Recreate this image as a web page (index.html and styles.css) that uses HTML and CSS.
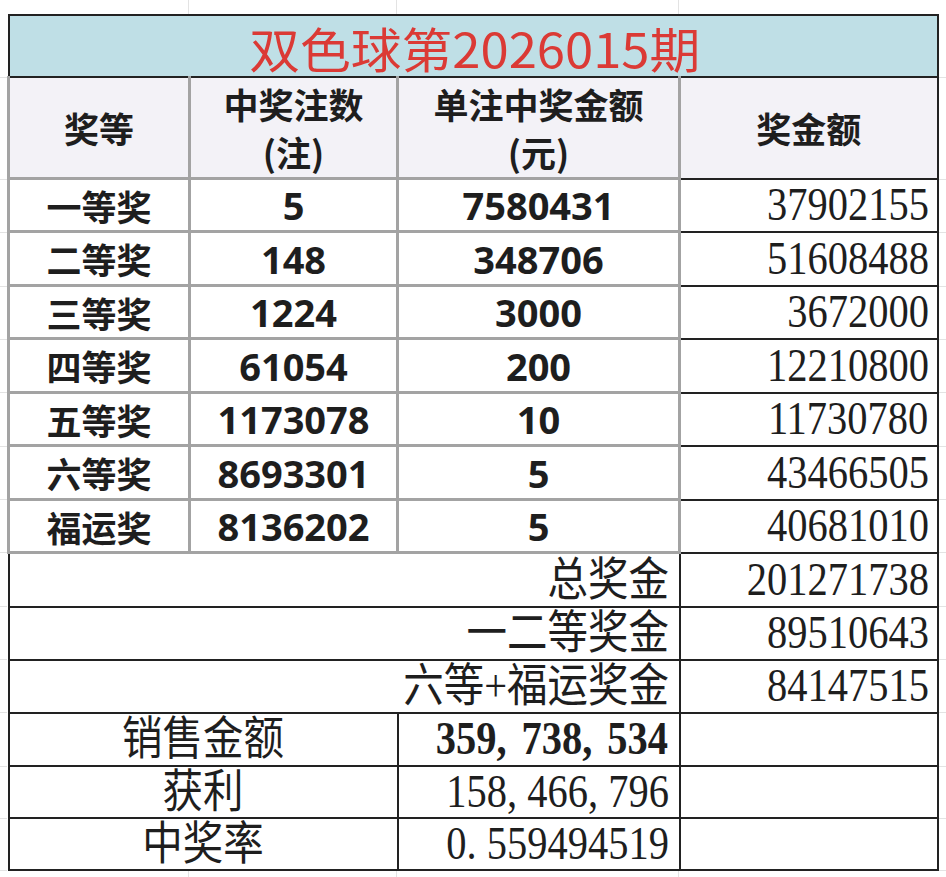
FILE: index.html
```html
<!DOCTYPE html>
<html lang="zh-CN">
<head>
<meta charset="utf-8">
<title>双色球第2026015期</title>
<link rel="stylesheet" href="styles.css">
</head>
<body>
<div class="sheet">
<table class="prize">
  <colgroup>
    <col class="c1"><col class="c2"><col class="c3"><col class="c4">
  </colgroup>
  <tr class="title"><td colspan="4"><span class="title-text">双色球第2026015期</span></td></tr>
  <tr class="head">
    <th>奖等</th>
    <th>中奖注数<br>(注)</th>
    <th>单注中奖金额<br>(元)</th>
    <th class="k">奖金额</th>
  </tr>
  <tr class="d ha"><td class="lbl">一等奖</td><td class="num">5</td><td class="num">7580431</td><td class="amt"><span>37902155</span></td></tr>
  <tr class="d hb"><td class="lbl">二等奖</td><td class="num">148</td><td class="num">348706</td><td class="amt"><span>51608488</span></td></tr>
  <tr class="d ha"><td class="lbl">三等奖</td><td class="num">1224</td><td class="num">3000</td><td class="amt"><span>3672000</span></td></tr>
  <tr class="d hb"><td class="lbl">四等奖</td><td class="num">61054</td><td class="num">200</td><td class="amt"><span>12210800</span></td></tr>
  <tr class="d ha"><td class="lbl">五等奖</td><td class="num">1173078</td><td class="num">10</td><td class="amt"><span>11730780</span></td></tr>
  <tr class="d hb"><td class="lbl">六等奖</td><td class="num">8693301</td><td class="num">5</td><td class="amt"><span>43466505</span></td></tr>
  <tr class="d ha"><td class="lbl">福运奖</td><td class="num">8136202</td><td class="num">5</td><td class="amt"><span>40681010</span></td></tr>
  <tr class="s hs1"><td colspan="3" class="slbl"><span>总奖金</span></td><td class="amt"><span>201271738</span></td></tr>
  <tr class="s hs"><td colspan="3" class="slbl"><span>一二等奖金</span></td><td class="amt"><span>89510643</span></td></tr>
  <tr class="s hs"><td colspan="3" class="slbl"><span>六等+福运奖金</span></td><td class="amt"><span>84147515</span></td></tr>
  <tr class="f hf1"><td colspan="2" class="flbl"><span>销售金额</span></td><td class="fval strong"><span>359<i class="cm">,</i>738<i class="cm">,</i>534</span></td><td></td></tr>
  <tr class="f hf"><td colspan="2" class="flbl"><span>获利</span></td><td class="fval"><span>158<i class="cm">,</i>466<i class="cm">,</i>796</span></td><td></td></tr>
  <tr class="f hf"><td colspan="2" class="flbl"><span>中奖率</span></td><td class="fval"><span>0<i class="cm">.</i>559494519</span></td><td></td></tr>
</table>
</div>
</body>
</html>
```
FILE: styles.css
```css
html, body {
  margin: 0;
  padding: 0;
  background: #ffffff;
}

/* spreadsheet canvas with faint grid lines around the table */
.sheet {
  --g: linear-gradient(#e3e3e3, #e3e3e3);
  box-sizing: border-box;
  min-height: 877px;
  padding: 14px 0 0 7px;
  background-color: #ffffff;
  background-repeat: no-repeat;
  background-image:
    var(--g), var(--g), var(--g),
    var(--g), var(--g), var(--g), var(--g), var(--g), var(--g), var(--g),
    var(--g), var(--g), var(--g), var(--g), var(--g), var(--g), var(--g), var(--g);
  background-size:
    1px 100%, 1px 100%, 1px 100%,
    100% 1px, 100% 1px, 100% 1px, 100% 1px, 100% 1px, 100% 1px, 100% 1px,
    100% 1px, 100% 1px, 100% 1px, 100% 1px, 100% 1px, 100% 1px, 100% 1px, 100% 1px;
  background-position:
    188px 0, 396px 0, 678px 0,
    0 77px, 0 179px, 0 232px, 0 286px, 0 339px, 0 392px, 0 446px,
    0 499px, 0 552px, 0 606px, 0 659px, 0 712px, 0 766px, 0 818px, 0 870px;
}

.prize {
  border-collapse: collapse;
  table-layout: fixed;
  width: 929px;
  color: #1e1e1e;
  background: #ffffff;
}

.c1 { width: 181px; }
.c2 { width: 208px; }
.c3 { width: 282px; }
.c4 { width: 258px; }

.prize td, .prize th {
  padding: 0;
  vertical-align: middle;
  line-height: 1;
}

/* title */
.title td {
  height: 60px;
  background: #bfdfe6;
  border: 2px solid #222;
  text-align: center;
}
.title-text {
  display: inline-block;
  font-family: "Noto Sans CJK SC", sans-serif;
  font-weight: 400;
  font-size: 47px;
  line-height: 1;
  color: #db3a35;
  transform: scale(1.08, 1.02);
  position: relative;
  left: 2px;
  top: 1px;
}

/* header */
.head th {
  height: 99px;
  background: #f3f2f7;
  border: 3px solid #a3a3a3;
  border-top: 2px solid #222;
  font-family: "Noto Sans CJK SC", sans-serif;
  font-weight: 700;
  font-size: 35px;
  line-height: 48px;
  text-align: center;
}
.head th.k {
  border-right: 2px solid #222;
  border-bottom: 2px solid #222;
}

/* row heights (content box; collapsed half-borders are added) */
.ha td { height: 50px; }
.hb td { height: 51px; }
.hs1 td { height: 51.5px; }
.hs td { height: 51px; }
.hf1 td { height: 51px; }
.hf td { height: 50px; }

/* data rows */
.d td {
  border: 3px solid #a3a3a3;
  text-align: center;
  font-weight: 700;
}
.d td.lbl {
  font-family: "Noto Sans CJK SC", sans-serif;
  font-size: 35px;
}
.d td.num {
  font-family: "Open Sans", "Noto Sans CJK SC", sans-serif;
  font-size: 38px;
}
.prize td.amt {
  border: 2px solid #222;
  text-align: right;
  padding-right: 8px;
  font-family: "Liberation Serif", serif;
  font-weight: 400;
}
.amt span,
.slbl span,
.fval span,
.flbl span {
  display: inline-block;
  font-size: 46px;
  line-height: 1;
  transform: scaleX(0.88);
  transform-origin: right center;
}

/* summary rows */
.s td {
  border: 2px solid #222;
}
.slbl {
  text-align: right;
  padding-right: 10px !important;
  font-family: "Liberation Serif", "Noto Sans CJK SC", serif;
  font-weight: 400;
}

/* footer rows */
.f td {
  border: 2px solid #222;
  font-family: "Liberation Serif", "Noto Sans CJK SC", serif;
  font-weight: 400;
}
.flbl {
  text-align: center;
}
.flbl span {
  transform-origin: center center;
}
.fval {
  text-align: right;
  padding-right: 10px !important;
}
.fval.strong {
  font-weight: 700;
}
.fval.strong .cm {
  width: 0.62em;
}
.cm {
  font-style: normal;
  display: inline-block;
  width: 0.5em;
  text-align: left;
}
```
